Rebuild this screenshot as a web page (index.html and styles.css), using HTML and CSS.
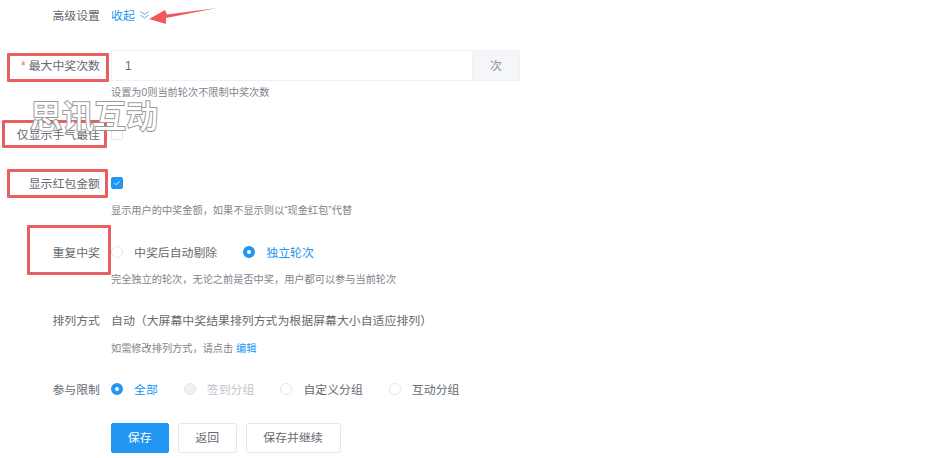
FILE: index.html
```html
<!DOCTYPE html>
<html lang="zh">
<head>
<meta charset="utf-8">
<title>高级设置</title>
<link rel="stylesheet" href="styles.css">
</head>
<body>
<form class="form">
  <div class="item">
    <div class="row">
      <span class="label">高级设置</span>
      <a class="link">收起</a>
      <svg class="chev" width="9" height="8" viewBox="0 0 9 8"><path d="M.5.500L4.500 3.500 8.500.500M.5 4L4.500 7 8.500 4" fill="none" stroke="#4aa8f2" stroke-width="1"/></svg>
    </div>
  </div>
  <div class="item has-help">
    <div class="row">
      <span class="label"><i class="req">*</i>最大中奖次数</span>
      <div class="input-group"><span class="input">1</span><span class="suffix">次</span></div>
    </div>
    <p class="help">设置为0则当前轮次不限制中奖次数</p>
  </div>
  <div class="item tight">
    <div class="row">
      <span class="label">仅显示手气最佳</span>
      <span class="check"></span>
    </div>
  </div>
  <div class="item has-help">
    <div class="row">
      <span class="label">显示红包金额</span>
      <span class="check on"><svg width="12" height="12" viewBox="0 0 12 12"><path d="M3 6l2.200 2.200L9.200 4" fill="none" stroke="#fff" stroke-width="1"/></svg></span>
    </div>
    <p class="help">显示用户的中奖金额，如果不显示则以“现金红包”代替</p>
  </div>
  <div class="item has-help snug">
    <div class="row">
      <span class="label">重复中奖</span>
      <span class="radio"></span><span class="opt">中奖后自动剔除</span>
      <span class="radio on"></span><span class="opt active">独立轮次</span>
    </div>
    <p class="help">完全独立的轮次，无论之前是否中奖，用户都可以参与当前轮次</p>
  </div>
  <div class="item has-help snug">
    <div class="row">
      <span class="label">排列方式</span>
      <span class="value">自动（大屏幕中奖结果排列方式为根据屏幕大小自适应排列）</span>
    </div>
    <p class="help low">如需修改排列方式，请点击 <a class="link small">编辑</a></p>
  </div>
  <div class="item tight">
    <div class="row">
      <span class="label">参与限制</span>
      <span class="radio on"></span><span class="opt active">全部</span>
      <span class="radio disabled"></span><span class="opt muted">签到分组</span>
      <span class="radio"></span><span class="opt">自定义分组</span>
      <span class="radio"></span><span class="opt">互动分组</span>
    </div>
  </div>
  <div class="actions">
    <button type="button" class="btn primary">保存</button>
    <button type="button" class="btn">返回</button>
    <button type="button" class="btn wide">保存并继续</button>
  </div>
</form>

<svg class="arrow" width="70" height="20" viewBox="0 0 70 20"><path d="M68 0L18 6.500 16 2 0 11 17 16 17 10Z" fill="#f0585c"/></svg>
<span class="mark box1"></span>
<span class="mark box2"></span>
<span class="mark box3"></span>
<span class="mark box4"></span>
<span class="watermark">思讯互动</span>
</body>
</html>
```

FILE: styles.css
```css
* { box-sizing: border-box; }
html, body { margin: 0; padding: 0; }
body {
  position: relative;
  width: 948px;
  height: 458px;
  overflow: hidden;
  background: #fff;
  color: #666a70;
  font: 11.9px/1.4 "Liberation Sans", "Noto Sans CJK SC", sans-serif;
}
.form { display: flex; flex-direction: column; }
.item { margin-bottom: 20px; }
.item.tight { margin-bottom: 19px; }
.item.has-help { margin-bottom: 17px; }
.item.snug { margin-bottom: 16px; }
.row { display: flex; align-items: center; height: 30px; }
.label, .opt, .value, .row > .link { padding-top: 2px; }
.label { width: 100px; margin-right: 11px; text-align: right; flex: none; }
.req { font-style: normal; color: #f56c6c; margin-right: 3px; }
.link { color: #2196f3; }
.link.small { font-size: 10.2px; }
.chev { margin-left: 5px; }
.input-group { display: flex; width: 409px; height: 31px; }
.input {
  flex: 1;
  padding-left: 13px;
  line-height: 31px;
  border: 1px solid #eff0f3;
  border-right: 0;
}
.suffix {
  width: 48px;
  line-height: 31px;
  text-align: center;
  color: #909399;
  background: #f5f6fa;
  border: 1px solid #eff0f3;
}
.help {
  margin: 2px 0 0 111px;
  height: 20px;
  font-size: 10.2px;
  line-height: 22px;
  color: #80848c;
}
.help.low { margin-top: 3px; }
.check {
  display: flex;
  align-items: center;
  justify-content: center;
  width: 12px;
  height: 12px;
  border: 1px solid #e4e7ed;
  border-radius: 2px;
}
.check.on { background: #2196f3; border-color: #2196f3; }
.radio {
  width: 12px;
  height: 12px;
  flex: none;
  border: 1px solid #e4e7ed;
  border-radius: 50%;
  margin-right: 11px;
}
.radio.on { background: #fff; border: 4px solid #2196f3; }
.radio.disabled { background: #eef0f5; }
.opt { margin-right: 26px; }
.opt.active { color: #2196f3; }
.opt.muted { color: #c0c4cc; }
.actions { display: flex; gap: 9px; margin-left: 110.500px; }
.btn {
  width: 58.500px;
  height: 30px;
  padding: 0;
  font: inherit;
  color: #666a70;
  background: #fff;
  border: 1px solid #e4e7ed;
  border-radius: 2px;
}
.btn.primary { color: #fff; background: #2196f3; border-color: #2196f3; }
.btn.wide { width: 95px; }
.mark { position: absolute; border: 3px solid #e85f5f; border-radius: 1px; }
.box1 { left: 7px; top: 53px; width: 102px; height: 29px; }
.box2 { left: 2px; top: 120px; width: 105px; height: 28px; }
.box3 { left: 7px; top: 169px; width: 101px; height: 29px; }
.box4 { left: 27px; top: 225px; width: 84px; height: 50px; }
.arrow { position: absolute; left: 149px; top: 8px; }
.watermark {
  position: absolute;
  left: 30px;
  top: 92px;
  font-family: "Noto Sans CJK SC", sans-serif;
  font-size: 32px;
  line-height: 44px;
  font-weight: 500;
  color: #fff;
  -webkit-text-stroke: 2px #9a9a9a;
  paint-order: stroke fill;
}
```
